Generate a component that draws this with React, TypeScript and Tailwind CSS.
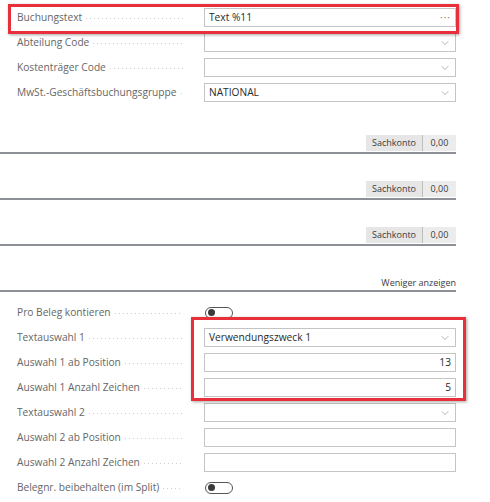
import { ChevronDown } from "lucide-react";

type Kind = "text" | "select" | "assist" | "number" | "toggle";

function Leader() {
  return (
    <div className="mx-1 mt-[3px] h-px flex-1 bg-[linear-gradient(to_right,#cfcfcf_1px,transparent_1px)] bg-[length:4px_1px]" />
  );
}

function Field({ label, kind, value }: { label: string; kind: Kind; value?: string }) {
  return (
    <div className="flex h-[19px] items-center">
      <div className="flex w-[187px] items-center pl-[17px]">
        <span className="whitespace-nowrap text-[10.2px] text-[#666666]">{label}</span>
        <Leader />
      </div>
      {kind === "toggle" ? (
        <div className="ml-[18px] flex h-[12px] w-[28px] items-center rounded-full border border-[#555555] px-[2px]">
          <span className="h-[7px] w-[7px] rounded-full bg-[#3a3a3a]" />
        </div>
      ) : (
        <div className="ml-[17px] flex h-[19px] w-[252px] items-center border border-[#c4c4c4] bg-white px-[4px] text-[10.2px] text-[#2a2a2a]">
          <span className={kind === "number" ? "flex-1 text-right" : "flex-1"}>{value}</span>
          {kind === "select" && <ChevronDown size={12} strokeWidth={1.3} className="text-[#8a8a8a]" />}
          {kind === "assist" && <span className="text-[10px] tracking-[1px] text-[#7a7a7a]">···</span>}
        </div>
      )}
    </div>
  );
}

function Subtotal({ top }: { top: string }) {
  return (
    <div className={`${top} flex w-[456px] justify-end border-b-2 border-[#8e9098]`}>
      <div className="mb-px flex h-[16px] text-[9px] text-[#3a3a3a]">
        <span className="flex w-[56px] items-center justify-center bg-[#e6e6e6]">Sachkonto</span>
        <span className="w-px bg-[#bdbdbd]" />
        <span className="flex w-[33px] items-center justify-center bg-[#ececec]">0,00</span>
      </div>
    </div>
  );
}

export default function App() {
  return (
    <div className="relative h-[502px] w-[490px] overflow-hidden bg-white font-['Open_Sans',sans-serif]">
      <div className="flex flex-col gap-[6px] pt-[8px]">
        <Field label="Buchungstext" kind="assist" value="Text %11" />
        <Field label="Abteilung Code" kind="select" />
        <Field label="Kostenträger Code" kind="select" />
        <Field label="MwSt.-Geschäftsbuchungsgruppe" kind="select" value="NATIONAL" />
      </div>

      <Subtotal top="pt-[33px]" />
      <Subtotal top="pt-[27px]" />
      <Subtotal top="pt-[27px]" />

      <div className="flex w-[456px] justify-end border-b-2 border-[#8e9098] pt-[31px] pb-px">
        <span className="text-[9px] leading-[12px] text-[#3a3a3a]">Weniger anzeigen</span>
      </div>

      <div className="flex flex-col gap-[6px] pt-[11px]">
        <Field label="Pro Beleg kontieren" kind="toggle" />
        <Field label="Textauswahl 1" kind="select" value="Verwendungszweck 1" />
        <Field label="Auswahl 1 ab Position" kind="number" value="13" />
        <Field label="Auswahl 1 Anzahl Zeichen" kind="number" value="5" />
        <Field label="Textauswahl 2" kind="select" />
        <Field label="Auswahl 2 ab Position" kind="text" />
        <Field label="Auswahl 2 Anzahl Zeichen" kind="text" />
        <Field label="Belegnr. beibehalten (im Split)" kind="toggle" />
      </div>

      {/* highlight frames */}
      <div className="absolute left-[8px] top-[4px] h-[30px] w-[451px] border-[3px] border-[#e8303a] shadow-[1px_1px_3px_rgba(0,0,0,0.35)]" />
      <div className="absolute left-[191px] top-[317px] h-[84px] w-[275px] border-[3px] border-[#e8303a] shadow-[1px_1px_3px_rgba(0,0,0,0.35)]" />
    </div>
  );
}
